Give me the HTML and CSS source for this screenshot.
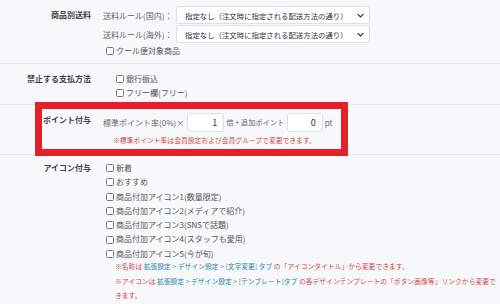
FILE: index.html
```html
<!DOCTYPE html>
<html lang="ja">
<head>
    <meta charset="UTF-8">
    <meta name="viewport" content="width=device-width, initial-scale=1.0">
    <title>商品設定</title>
    <link rel="stylesheet" href="styles.css">
</head>
<body>
    <div class="row row-shipping">
        <div class="row-label">商品別送料</div>
        <div class="row-body">
            <div class="field">
                <span class="field-name">送料ルール(国内)：</span>
                <div class="select">
                    <span>指定なし（注文時に指定される配送方法の通り）</span>
                    <svg class="chevron" viewBox="0 0 10 6"><path d="M1 1l4 4 4-4" fill="none" stroke="#333" stroke-width="1.8"/></svg>
                </div>
            </div>
            <div class="field">
                <span class="field-name">送料ルール(海外)：</span>
                <div class="select">
                    <span>指定なし（注文時に指定される配送方法の通り）</span>
                    <svg class="chevron" viewBox="0 0 10 6"><path d="M1 1l4 4 4-4" fill="none" stroke="#333" stroke-width="1.8"/></svg>
                </div>
            </div>
            <label class="check"><span class="cb"></span>クール便対象商品</label>
        </div>
    </div>

    <div class="row row-payment">
        <div class="row-label">禁止する支払方法</div>
        <div class="row-body">
            <label class="check"><span class="cb"></span>銀行振込</label>
            <label class="check"><span class="cb"></span>フリー欄(フリー)</label>
        </div>
    </div>

    <div class="row row-point">
        <div class="highlight">
            <div class="row-label">ポイント付与</div>
            <div class="row-body">
                <div class="point-line">
                    <span>標準ポイント率(0%)×</span>
                    <span class="num-input wide">1</span>
                    <span class="small">倍 + 追加ポイント</span>
                    <span class="num-input">0</span>
                    <span>pt</span>
                </div>
                <p class="note point-note">※標準ポイント率は会員設定および会員グループで変更できます。</p>
            </div>
        </div>
    </div>

    <div class="row row-icons">
        <div class="row-label">アイコン付与</div>
        <div class="row-body">
            <label class="check"><span class="cb"></span>新着</label>
            <label class="check"><span class="cb"></span>おすすめ</label>
            <label class="check"><span class="cb"></span>商品付加アイコン1(数量限定)</label>
            <label class="check"><span class="cb"></span>商品付加アイコン2(メディアで紹介)</label>
            <label class="check"><span class="cb"></span>商品付加アイコン3(SNSで話題)</label>
            <label class="check"><span class="cb"></span>商品付加アイコン4(スタッフも愛用)</label>
            <label class="check"><span class="cb"></span>商品付加アイコン5(今が旬)</label>
            <div class="notes">
                <p class="note">※名称は <a>拡張設定</a> <a>&gt;</a> <a>デザイン設定</a> <a>&gt;</a> <a>[文字変更] タブ</a> の「アイコンタイトル」から変更できます。</p>
                <p class="note">※アイコンは <a>拡張設定</a> <a>&gt;</a> <a>デザイン設定</a> <a>&gt;</a> <a>[テンプレート]タブ</a> の各デザインテンプレートの「ボタン画像等」リンクから変更できます。</p>
            </div>
        </div>
    </div>
</body>
</html>
```

FILE: styles.css
```css
body {
    font-family: "Noto Sans CJK JP", "Noto Sans", sans-serif;
    font-size: 8px;
    color: #555;
    margin: 0;
    padding: 0;
    background: #f7f8fa;
    height: 304px;
    overflow: hidden;
}
.row {
    display: grid;
    grid-template-columns: 91px 1fr;
    column-gap: 12px;
    border-bottom: 1px solid #e7e9ed;
}
.row-label {
    text-align: right;
    font-weight: bold;
    color: #444;
    white-space: nowrap;
}
.row-body {
    display: flex;
    flex-direction: column;
    align-items: flex-start;
    min-width: 0;
}

/* 商品別送料 */
.row-shipping {
    padding: 6px 0 5px;
}
.row-shipping .row-label {
    line-height: 18px;
}
.field {
    display: flex;
    align-items: center;
    height: 18px;
    margin-bottom: 1px;
}
.field-name {
    width: 73px;
    color: #666;
    white-space: nowrap;
}
.select {
    display: flex;
    align-items: center;
    justify-content: space-between;
    box-sizing: border-box;
    width: 194px;
    height: 18px;
    padding: 0 5px 0 8px;
    background: #fff;
    border: 1px solid #dce1e8;
    border-radius: 3px;
    color: #333;
    font-size: 7.4px;
    white-space: nowrap;
}
.chevron {
    width: 7px;
    height: 5px;
    flex-shrink: 0;
}
.check {
    display: flex;
    align-items: center;
    line-height: 14px;
    height: 14px;
    margin-left: 3px;
    color: #555;
    white-space: nowrap;
}
.cb {
    display: inline-block;
    box-sizing: border-box;
    width: 8px;
    height: 8px;
    margin-right: 2px;
    border: 1px solid #7a7a7a;
    border-radius: 1.5px;
    background: #fff;
}

/* 禁止する支払方法 */
.row-payment {
    padding: 8px 0 4px;
}
.row-payment .row-label {
    line-height: 14px;
}
.row-payment .check {
    margin-left: 13px;
}

/* ポイント付与 */
.row-point {
    display: block;
    padding: 4px 0 5px 42px;
}
.highlight {
    display: grid;
    grid-template-columns: 49px 1fr;
    column-gap: 12px;
    width: 299px;
    height: 40px;
    padding-top: 4px;
    box-sizing: border-box;
    outline: 7px solid #e61f2a;
}
.highlight .row-label {
    line-height: 14px;
}
.point-line {
    display: flex;
    align-items: center;
    height: 18px;
    gap: 2px;
    color: #666;
    white-space: nowrap;
}
.point-line span {
    flex-shrink: 0;
}
.point-line .small {
    font-size: 7.3px;
}
.num-input {
    box-sizing: border-box;
    width: 36px;
    height: 19px;
    line-height: 17px;
    padding-right: 6px;
    text-align: right;
    background: #fff;
    border: 1px solid #dce1e8;
    border-radius: 3px;
    color: #333;
    font-size: 9px;
}
.num-input.wide {
    width: 37px;
    margin-left: 1px;
}
.note {
    margin: 0;
    font-size: 6.8px;
    line-height: 14.5px;
    color: #cf4a47;
}
.point-note {
    margin-left: 10px;
    line-height: 18px;
    white-space: nowrap;
}

/* アイコン付与 */
.row-icons {
    padding-top: 6px;
    border-bottom: none;
}
.row-icons .row-label {
    line-height: 14.3px;
}
.row-icons .check {
    height: 14.3px;
    line-height: 14.3px;
}
.notes {
    margin: -2px 2px 0 12px;
}
.note a {
    color: #2b84a8;
}
```
